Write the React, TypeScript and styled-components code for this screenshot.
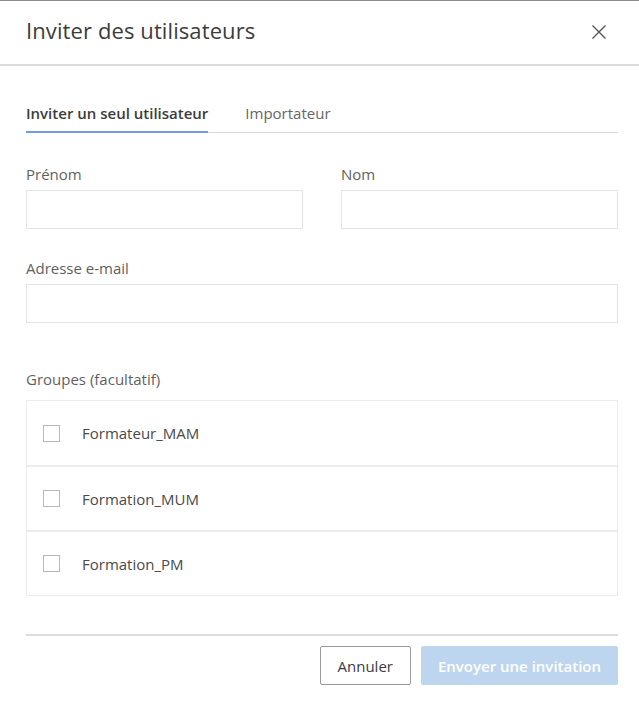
import React from "react";
import styled, { createGlobalStyle } from "styled-components";

const Global = createGlobalStyle`
  html, body { margin: 0; padding: 0; background: #ffffff; }
  body { font-family: "Open Sans", "Noto Sans", "Liberation Sans", sans-serif; }
  * { box-sizing: border-box; }
`;

const Dialog = styled.div`
  width: 639px;
  height: 703px;
  background: #fff;
  border-top: 1px solid #8a8a8a;
  display: flex;
  flex-direction: column;
`;

const Header = styled.div`
  height: 65px;
  display: flex;
  align-items: center;
  justify-content: space-between;
  padding: 0 26px 5px 26px;
  border-bottom: 2px solid #dcdcdc;
`;

const Title = styled.h1`
  margin: 0;
  font-size: 22px;
  font-weight: 400;
  color: #3c3c3c;
  letter-spacing: 0.1px;
`;

const CloseButton = styled.button`
  border: none;
  background: none;
  padding: 0;
  width: 20px;
  height: 20px;
  display: flex;
  align-items: center;
  justify-content: center;
  margin-right: 4px;
  margin-top: 3px;
  cursor: pointer;
`;

const Body = styled.div`
  padding: 30px 21px 0 26px;
  display: flex;
  flex-direction: column;
`;

const Tabs = styled.div`
  display: flex;
  gap: 37px;
  border-bottom: 1px solid #d9d9d9;
  height: 37px;
`;

const Tab = styled.div<{ $active?: boolean }>`
  font-size: 15px;
  font-weight: ${(p) => (p.$active ? 600 : 400)};
  color: ${(p) => (p.$active ? "#3c3c3c" : "#666666")};
  padding-top: 7px;
  margin-bottom: -1px;
  border-bottom: 2px solid ${(p) => (p.$active ? "#6a9fdc" : "transparent")};
`;

const Row = styled.div`
  display: grid;
  grid-template-columns: 277px 277px;
  column-gap: 38px;
  margin-top: 30px;
`;

const Field = styled.div`
  display: flex;
  flex-direction: column;
`;

const Label = styled.label`
  font-size: 15px;
  color: #5f5f5f;
  height: 22px;
  line-height: 22px;
  margin-bottom: 5px;
`;

const Input = styled.input`
  height: 39px;
  border: 1px solid #e4e4e4;
  background: #fff;
  outline: none;
  font-family: inherit;
  font-size: 14px;
  padding: 0 10px;
  width: 100%;
`;

const FullField = styled(Field)`
  margin-top: 28px;
  width: 592px;
`;

const GroupsField = styled(Field)`
  margin-top: 45px;
  width: 592px;
`;

const GroupList = styled.div`
  border: 1px solid #ececec;
  display: flex;
  flex-direction: column;
  margin-top: 5px;
`;

const GroupRow = styled.label`
  height: 64px;
  display: flex;
  align-items: center;
  padding-left: 16px;
  gap: 22px;
  font-size: 15px;
  color: #4a4a4a;
  & + & {
    height: 65px;
    border-top: 2px solid #ececec;
  }
`;

const Box = styled.span`
  width: 17px;
  height: 17px;
  border: 1px solid #b8b8b8;
  background: #fff;
  flex: none;
`;

const Footer = styled.div`
  margin: 38px 21px 0 26px;
  border-top: 2px solid #dcdcdc;
  padding-top: 10px;
  display: flex;
  justify-content: flex-end;
  gap: 10px;
`;

const Button = styled.button<{ $primary?: boolean }>`
  height: 39px;
  font-family: inherit;
  font-size: 15px;
  padding: 0 ${(p) => (p.$primary ? 16 : 17)}px;
  border-radius: 2px;
  border: 1px solid ${(p) => (p.$primary ? "#bed5ef" : "#9a9a9a")};
  background: ${(p) => (p.$primary ? "#bed5ef" : "#ffffff")};
  color: ${(p) => (p.$primary ? "#ffffff" : "#3c3c3c")};
  font-weight: ${(p) => (p.$primary ? 600 : 500)};
`;

const groups = ["Formateur_MAM", "Formation_MUM", "Formation_PM"];

export default function App() {
  return (
    <>
      <Global />
      <Dialog>
        <Header>
          <Title>Inviter des utilisateurs</Title>
          <CloseButton aria-label="Fermer">
            <svg width="16" height="16" viewBox="0 0 16 16">
              <path d="M1.5 1.5 L14.5 14.5 M14.5 1.5 L1.5 14.5" stroke="#555" strokeWidth="1.4" fill="none" />
            </svg>
          </CloseButton>
        </Header>
        <Body>
          <Tabs>
            <Tab $active>Inviter un seul utilisateur</Tab>
            <Tab>Importateur</Tab>
          </Tabs>
          <Row>
            <Field>
              <Label>Prénom</Label>
              <Input />
            </Field>
            <Field>
              <Label>Nom</Label>
              <Input />
            </Field>
          </Row>
          <FullField>
            <Label>Adresse e-mail</Label>
            <Input />
          </FullField>
          <GroupsField>
            <Label>Groupes (facultatif)</Label>
            <GroupList>
              {groups.map((g) => (
                <GroupRow key={g}>
                  <Box />
                  {g}
                </GroupRow>
              ))}
            </GroupList>
          </GroupsField>
        </Body>
        <Footer>
          <Button>Annuler</Button>
          <Button $primary>Envoyer une invitation</Button>
        </Footer>
      </Dialog>
    </>
  );
}
